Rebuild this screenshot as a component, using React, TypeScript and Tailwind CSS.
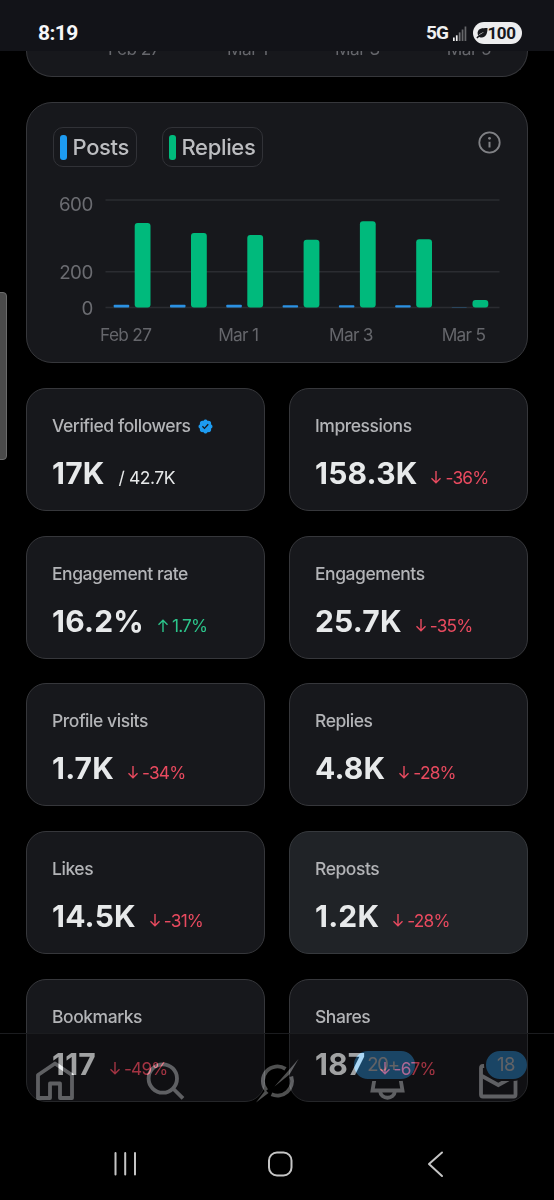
import React from 'react';

interface Stat {
  label: string;
  value: string;
  change?: string;
  total?: string;
  verified?: boolean;
  pressed?: boolean;
}

interface Day {
  label?: string;
  posts: number;
  replies: number;
}

const STATS: Stat[] = [
  { label: 'Verified followers', value: '17K', total: '/ 42.7K', verified: true },
  { label: 'Impressions', value: '158.3K', change: '-36%' },
  { label: 'Engagement rate', value: '16.2%', change: '1.7%' },
  { label: 'Engagements', value: '25.7K', change: '-35%' },
  { label: 'Profile visits', value: '1.7K', change: '-34%' },
  { label: 'Replies', value: '4.8K', change: '-28%' },
  { label: 'Likes', value: '14.5K', change: '-31%' },
  { label: 'Reposts', value: '1.2K', change: '-28%', pressed: true },
  { label: 'Bookmarks', value: '117', change: '-49%' },
  { label: 'Shares', value: '187', change: '-67%' },
];

const DAYS: Day[] = [
  { label: 'Feb 27', posts: 16, replies: 472 },
  { posts: 16, replies: 416 },
  { label: 'Mar 1', posts: 15, replies: 405 },
  { posts: 13, replies: 378 },
  { label: 'Mar 3', posts: 13, replies: 482 },
  { posts: 13, replies: 381 },
  { label: 'Mar 5', posts: 1, replies: 42 },
];

const CHART_BASE = 107.5;
const toY = (value: number) => CHART_BASE - (value * 107.5) / 600;

const StatusBar: React.FC = () => (
  <header className="relative z-10 flex h-[51px] w-full shrink-0 items-start justify-between bg-[#121318] pl-[38px] pr-[32px] pt-[22px] font-['Roboto',sans-serif]">
    <span className="text-[21px] font-bold leading-[22px] tracking-[-0.6px] text-[#f7f7f8]">8:19</span>
    <div className="flex h-[22px] items-center">
      <span className="text-[19px] font-bold leading-[22px] tracking-[-0.9px] text-[#f0f0f1]">5G</span>
      <svg className="ml-[5px] h-[15px] w-[14px]" viewBox="0 0 14 15">
        <rect x="0" y="11.5" width="1.7" height="3.5" fill="#eee" />
        <rect x="2.9" y="9.3" width="1.7" height="5.7" fill="#eee" />
        <rect x="5.8" y="6.4" width="1.7" height="8.6" fill="#77787b" />
        <rect x="8.7" y="3.5" width="1.7" height="11.5" fill="#66676a" />
        <rect x="11.6" y="0.5" width="1.7" height="14.5" fill="#66676a" />
      </svg>
      <div className="ml-[6px] flex h-[22px] w-[49px] items-center rounded-full bg-[#ededee] pl-[2.5px] text-[#17181c]">
        <svg className="h-[13px] w-[12px] shrink-0" viewBox="0 0 12 13">
          <path d="M11.5 1C6 1 2.2 1.5 1.6 5.5c-.1 1.2.2 2.2.6 2.900C4 6.800 6 5.800 8.200 5.100 5.500 6.600 2.500 8.200.4 10.500l.9.900 1.800-1.500C8.500 11.800 11.500 8.500 11.500 1z" fill="currentColor" />
        </svg>
        <span className="text-[17px] font-bold leading-[22px] tracking-[-0.4px]">100</span>
      </div>
    </div>
  </header>
);

const LegendChip: React.FC<{ label: string; children: React.ReactNode }> = ({ label, children }) => (
  <div className="flex h-10 items-center rounded-[10px] border border-[#313237] px-[6.5px]">
    {children}
    <span className="ml-[6px] text-[22px] font-medium leading-10 tracking-[-0.35px] text-[#bcbdc0]">{label}</span>
  </div>
);

const BarChart: React.FC = () => (
  <svg className="mt-[27px] block h-[155px] w-[450px]" viewBox="0 -6 450 155">
    {[600, 200, 0].map((tick) => (
      <g key={tick}>
        <line x1="52.5" x2="446.5" y1={toY(tick)} y2={toY(tick)} stroke="#2b2c31" strokeWidth="1.5" />
        <text x="39.8" y={toY(tick) + (tick === 600 ? 11 : 7)} textAnchor="end" fontSize="18.8" letterSpacing="-0.5" fill="#6b6c71">
          {tick}
        </text>
      </g>
    ))}
    {DAYS.map((day, i) => {
      const x = 60.7 + i * 56.3;
      return (
        <g key={i}>
          <rect x={x} y={toY(day.posts)} width="15.5" height={CHART_BASE - toY(day.posts)} rx="0.8" fill="#2b91e3" />
          <rect x={x + 21} y={toY(day.replies)} width="15.8" height={CHART_BASE - toY(day.replies)} rx="3" fill="#00ba7c" />
          {day.label && (
            <text x={x + 12} y="141" textAnchor="middle" fontSize="17.3" letterSpacing="-0.7" fill="#65666b">
              {day.label}
            </text>
          )}
        </g>
      );
    })}
  </svg>
);

const ChartCard: React.FC = () => (
  <section className="mt-[24.5px] h-[261.5px] shrink-0 rounded-[26px] border border-[#36373b] bg-[#17181c] pl-[25.5px] pr-[26.5px] pt-[24.5px]">
    <div className="flex items-start justify-between">
      <div className="flex gap-[25px]">
        <LegendChip label="Posts">
          <span className="h-[25px] w-[6.5px] rounded-[3px] bg-[#1d9bf0]" />
        </LegendChip>
        <LegendChip label="Replies">
          <span className="h-[25px] w-[6.5px] rounded-[3px] bg-[#00ba7c]" />
        </LegendChip>
      </div>
      <svg className="mt-[4px] h-[23px] w-[23px] text-[#808185]" viewBox="0 0 23 23" fill="none" stroke="currentColor">
        <circle cx="11.5" cy="11.5" r="10.2" strokeWidth="1.8" />
        <path d="M11.5 10.8v5.7" strokeWidth="2" />
        <circle cx="11.5" cy="7.3" r="1.4" fill="currentColor" stroke="none" />
      </svg>
    </div>
    <BarChart />
  </section>
);

const Arrow: React.FC<{ up: boolean }> = ({ up }) => (
  <svg className="mr-[4px] h-[13px] w-[10px]" viewBox="0 0 10 13" fill="none" stroke="currentColor" strokeWidth="1.4">
    {up ? <path d="M5 13V1.2M.5 5.7 5 1.2l4.5 4.5" /> : <path d="M5 0v11.8M.5 7.3 5 11.8l4.5-4.5" />}
  </svg>
);

const StatCard: React.FC<{ stat: Stat }> = ({ stat }) => {
  const up = !!stat.change && !stat.change.startsWith('-');
  return (
    <div className={`h-[123px] rounded-[20px] border pl-[25px] pt-[25px] ${stat.pressed ? 'border-[#36393d] bg-[#202327]' : 'border-[#36373b] bg-[#17181c]'}`}>
      <div className="flex h-[24px] items-center">
        <span className="text-[17.5px] font-medium leading-[24px] tracking-[-0.45px] text-[#b3b4b7]">{stat.label}</span>
        {stat.verified && (
          <svg className="ml-[8px] h-[15px] w-[15px]" viewBox="1 1 22 22" fill="#1d9bf0">
            <path d="M22.25 12c0-1.43-.88-2.67-2.19-3.34.46-1.39.2-2.9-.81-3.91s-2.52-1.27-3.91-.81c-.66-1.31-1.91-2.19-3.34-2.19s-2.67.88-3.33 2.19c-1.4-.46-2.91-.2-3.92.81s-1.26 2.52-.8 3.91c-1.31.67-2.2 1.91-2.2 3.34s.89 2.67 2.2 3.34c-.46 1.39-.21 2.9.8 3.91s2.52 1.26 3.91.81c.67 1.31 1.91 2.19 3.34 2.19s2.68-.88 3.34-2.19c1.39.45 2.9.2 3.91-.81s1.27-2.52.81-3.91c1.31-.67 2.19-1.91 2.19-3.34zm-11.71 4.2L6.8 12.46l1.41-1.42 2.26 2.26 4.8-5.23 1.47 1.36-6.2 6.77z" />
          </svg>
        )}
      </div>
      <div className="mt-[15px] flex h-[40px] items-baseline">
        <span className="text-[30px] font-bold leading-[40px] tracking-[0.2px] text-[#e7e9ea]">{stat.value}</span>
        {stat.total && <span className="ml-[14px] text-[17.5px] tracking-[-0.45px] text-[#e7e9ea]">{stat.total}</span>}
        {stat.change && (
          <span className={`ml-[14px] flex items-baseline text-[17.3px] tracking-[-0.8px] ${up ? 'text-[#2cc58b]' : 'text-[#e84a5f]'}`}>
            <Arrow up={up} />
            {stat.change}
          </span>
        )}
      </div>
    </div>
  );
};

const TabBar: React.FC = () => (
  <nav className="absolute inset-x-0 top-[1033px] h-[77px]">
    <div className="h-full border-t border-[#1b1c1f] bg-black/30" />
    {/* Faded tab icons, light adds up with the cards below */}
    <div className="absolute inset-0 pt-px opacity-[0.34] mix-blend-plus-lighter">
      <svg className="block h-[76px] w-[554px]" viewBox="0 0 554 76" fill="none" stroke="#e7e9ea" strokeWidth="3.8">
        <path d="M38 41 55 29.5 72 41V64H60V49.5H50V64H38z" strokeLinejoin="round" />
        <circle cx="162.8" cy="44.5" r="14.2" />
        <path d="m173 54.5 10 9.8" />
        <path d="M266.5 56.5A14.5 14.5 0 0 1 285.5 34.9M291.3 42.500A14.500 14.500 0 0 1 271.500 60.200" />
        <path d="M298.5 25 274.5 52.500 289.500 40.500zM256 68.500 265.500 56l3 3z" fill="#e7e9ea" stroke="none" />
        <path d="M375 42l-2.5 14.5h30L400 42M380 57c1 9 14 9 15 0" />
        <rect x="481" y="32" width="34.5" height="30.5" rx="2" />
        <path d="m481 41.5 17.3 9.5 17.2-9.5" />
      </svg>
      <span className="absolute left-[352px] top-[16px] flex h-[32px] w-[65px] items-center justify-center rounded-full border-2 border-black bg-[#1d9bf0] pr-[3px] text-[18.5px] tracking-[-1.2px] text-[#f0f0f0]">20+</span>
      <span className="absolute left-[484px] top-[16px] flex h-[32px] w-[45px] items-center justify-center rounded-full border-2 border-black bg-[#1d9bf0] pr-px text-[18.5px] tracking-[-0.5px] text-[#f0f0f0]">18</span>
    </div>
  </nav>
);

const SystemNav: React.FC = () => (
  <footer className="absolute inset-x-0 bottom-0 h-[90px]">
    <svg className="h-full w-full" viewBox="0 0 554 90" fill="none" stroke="#c5c5c5" strokeWidth="2" strokeLinecap="round">
      <path d="M115.5 43v21.5M125.2 43v21.5M135 43v21.5" />
      <rect x="269" y="42.5" width="22.5" height="23" rx="8" />
      <path d="m442 42.500-13 11.500 13 12" strokeLinejoin="round" />
    </svg>
  </footer>
);

export default function App() {
  return (
    <div className="relative flex h-[1200px] w-[554px] flex-col overflow-hidden bg-black font-['Inter',sans-serif]">
      <StatusBar />
      <main className="flex flex-col px-[26px]">
        {/* Bottom of the previous chart, scrolled under the status bar */}
        <section className="-mt-[49px] h-[75px] shrink-0 rounded-b-[26px] border border-t-0 border-[#36373b] bg-[#17181c] pl-[81px] pr-[36px] pt-[35px]">
          <div className="flex justify-between text-[17.3px] leading-[24px] tracking-[-0.6px] text-[#65666b]">
            <span>Feb 27</span>
            <span>Mar 1</span>
            <span>Mar 3</span>
            <span>Mar 5</span>
          </div>
        </section>
        <ChartCard />
        <div className="mt-[25px] grid grid-cols-2 gap-x-[24px] gap-y-[24.7px]">
          {STATS.map((stat) => (
            <StatCard key={stat.label} stat={stat} />
          ))}
        </div>
      </main>
      <TabBar />
      <SystemNav />
      <div className="absolute -left-[4px] top-[292px] h-[168px] w-[11px] rounded-[4px] border border-[#6b6b6b] bg-[#4a4a4a]" />
    </div>
  );
}
